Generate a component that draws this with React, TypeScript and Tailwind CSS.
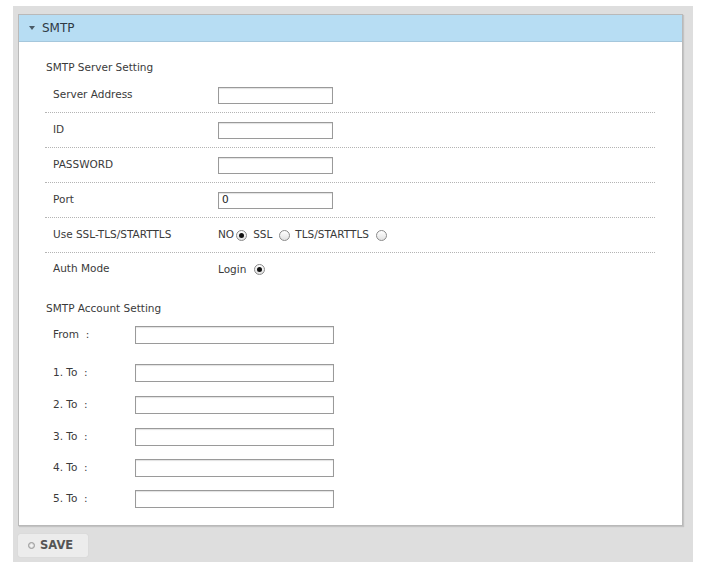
import React from 'react'

const font = { fontFamily: '"DejaVu Sans", Verdana, sans-serif' }

function Radio({ checked }: { checked?: boolean }) {
  return (
    <span className="inline-flex h-[11px] w-[11px] items-center justify-center rounded-full border border-[#8a8a8a] bg-gradient-to-b from-white to-[#e2e2e2]">
      {checked ? <span className="h-[5px] w-[5px] rounded-full bg-[#111]" /> : null}
    </span>
  )
}

function TextBox({ value = '', wide }: { value?: string; wide?: boolean }) {
  return (
    <div
      className={`flex items-center border border-[#9a9a9a] bg-white pl-[3px] text-[10.5px] text-[#222] shadow-[inset_0_1px_1px_rgba(0,0,0,0.12)] ${
        wide ? 'h-[18px] w-[199px]' : 'h-[17px] w-[115px]'
      }`}
    >
      {value}
    </div>
  )
}

function Row({ label, last, children }: { label: string; last?: boolean; children: React.ReactNode }) {
  return (
    <div
      className={`flex items-center ${last ? 'h-[31px]' : 'h-[35px] border-b border-dotted border-[#b4b4b4]'}`}
    >
      <div className="w-[173px] pl-[8px] text-[10.5px] text-[#3a3a3a]">{label}</div>
      {children}
    </div>
  )
}

const toRows = ['1. To', '2. To', '3. To', '4. To', '5. To']
const toGaps = ['mt-[20px]', 'mt-[14px]', 'mt-[14px]', 'mt-[13px]', 'mt-[13px]']

export default function App() {
  return (
    <div className="h-[572px] w-[704px] bg-white pl-[13px] pt-[6px]" style={font}>
      <div className="h-[556px] w-[680px] bg-[#dedede] pl-[5px] pt-[8px]">
        <div className="h-[512px] w-[665px] border border-[#b9b9b9] bg-white shadow-[1px_1px_1px_rgba(0,0,0,0.12)]">
          <div className="flex h-[27px] items-center gap-[7px] border-b border-[#a5c7dc] bg-[#b7ddf3] pl-[10px]">
            <svg width="6" height="5" viewBox="0 0 6 5">
              <polygon points="0,0 6,0 3,4" fill="#4a5a66" />
            </svg>
            <span className="text-[12px] text-[#2f3a44]">SMTP</span>
          </div>

          <div className="pl-[26px] pr-[27px]">
            <div className="mt-[18px] pl-[1px] text-[10.5px] leading-[14px] text-[#3a3a3a]">SMTP Server Setting</div>
            <div className="mt-[4px] w-[610px]">
              <Row label="Server Address">
                <TextBox />
              </Row>
              <Row label="ID">
                <TextBox />
              </Row>
              <Row label="PASSWORD">
                <TextBox />
              </Row>
              <Row label="Port">
                <TextBox value="0" />
              </Row>
              <Row label="Use SSL-TLS/STARTTLS">
                <div className="flex items-center text-[10.5px] text-[#3a3a3a]">
                  <span>NO</span>
                  <span className="ml-[2px] flex"><Radio checked /></span>
                  <span className="ml-[6px]">SSL</span>
                  <span className="ml-[7px] flex"><Radio /></span>
                  <span className="ml-[5px]">TLS/STARTTLS</span>
                  <span className="ml-[7px] flex"><Radio /></span>
                </div>
              </Row>
              <Row label="Auth Mode" last>
                <div className="flex items-center pt-[2px] text-[10.5px] text-[#3a3a3a]">
                  <span>Login</span>
                  <span className="ml-[8px] flex"><Radio checked /></span>
                </div>
              </Row>
            </div>

            <div className="mt-[17px] pl-[1px] text-[10.5px] leading-[14px] text-[#3a3a3a]">SMTP Account Setting</div>
            <div className="mt-[11px] flex items-center">
              <div className="w-[90px] pl-[8px] text-[10.5px] text-[#3a3a3a]">From&nbsp;&nbsp;:</div>
              <TextBox wide />
            </div>
            {toRows.map((t, i) => (
              <div key={t} className={`${toGaps[i]} flex items-center`}>
                <div className="w-[90px] pl-[8px] text-[10.5px] text-[#3a3a3a]">{t}&nbsp;&nbsp;:</div>
                <TextBox wide />
              </div>
            ))}
          </div>
        </div>

        <div className="mt-[8px] flex h-[23px] w-[70px] items-center gap-[5px] rounded-[2px] bg-[#ececec] pl-[10px] shadow-[0_0_1px_rgba(0,0,0,0.15)]">
          <span className="flex h-[7px] w-[7px] items-center justify-center rounded-full border border-[#999] bg-[#d8d8d8]">
            <span className="h-[3px] w-[3px] rounded-full bg-[#f4f4f4]" />
          </span>
          <span className="text-[11.5px] font-bold text-[#555]">SAVE</span>
        </div>
      </div>
    </div>
  )
}
